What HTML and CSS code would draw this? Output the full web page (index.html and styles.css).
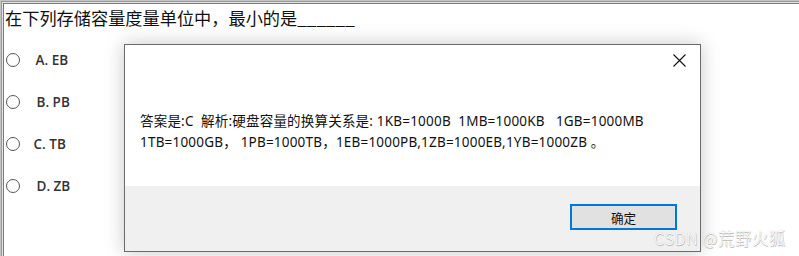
FILE: index.html
```html
<!DOCTYPE html>
<html lang="zh-CN">
<head>
<meta charset="utf-8">
<title>在下列存储容量度量单位中，最小的是</title>
<link rel="stylesheet" href="styles.css">
</head>
<body>
<div class="page">
  <div class="question">在下列存储容量度量单位中，最小的是______</div>
  <ul class="options">
    <li class="option"><span class="radio"></span><span class="label">A. EB</span></li>
    <li class="option opt-b"><span class="radio"></span><span class="label">B. PB</span></li>
    <li class="option opt-c"><span class="radio"></span><span class="label">C. TB</span></li>
    <li class="option opt-d"><span class="radio"></span><span class="label">D. ZB</span></li>
  </ul>

  <div class="dialog">
    <div class="dialog-head">
      <svg class="close" width="13" height="13" viewBox="0 0 13 13"><path d="M0.5 0.5 L12.5 12.5 M12.5 0.5 L0.5 12.5" stroke="#111" stroke-width="1.1" fill="none"/></svg>
    </div>
    <div class="dialog-body">
      <p class="msg">答案是:C  解析:硬盘容量的换算关系是: 1KB=1000B  1MB=1000KB   1GB=1000MB</p>
      <p class="msg">1TB=1000GB， 1PB=1000TB，1EB=1000PB,1ZB=1000EB,1YB=1000ZB 。</p>
    </div>
    <div class="dialog-foot">
      <button class="ok">确定</button>
    </div>
  </div>

  <div class="watermark">CSDN @荒野火狐</div>
</div>
</body>
</html>
```
FILE: styles.css
```css
html, body {
  margin: 0;
  padding: 0;
  background: #fff;
}
.page {
  position: relative;
  width: 799px;
  height: 256px;
  overflow: hidden;
  box-sizing: border-box;
  padding: 4px 0 0 4px;
  background: #fff;
  box-shadow: inset 1px 1px 0 #c4c4c4, inset 2px 2px 0 #9a9a9a, inset 3px 3px 0 #e4e4e4, inset 4px 4px 0 #7a7a7a;
  font-family: "Noto Sans CJK SC", "Noto Sans", sans-serif;
}
.question {
  margin-left: 1px;
  font-size: 17.2px;
  line-height: 28px;
  color: #111;
}
.options {
  list-style: none;
  margin: 0;
  padding: 0;
  display: flex;
  flex-direction: column;
  gap: 27px;
  margin-top: 20px;
}
.option {
  display: flex;
  align-items: center;
  height: 15px;
}
.radio {
  width: 12px;
  height: 12px;
  border: 1.5px solid #555;
  border-radius: 50%;
  margin-left: 1.5px;
  flex: none;
}
.label {
  font-family: "Open Sans", "Noto Sans", sans-serif;
  font-weight: 600;
  font-size: 13.5px;
  color: #333;
  margin-left: 16px;
}
.opt-b .label { margin-left: 17px; }
.opt-c .label { margin-left: 14px; }
.opt-d .label { margin-left: 17px; }

.dialog {
  position: absolute;
  left: 124px;
  top: 44px;
  width: 577px;
  height: 208px;
  box-sizing: border-box;
  border: 1px solid #6b6b6b;
  background: #fff;
  box-shadow: 0 0 18px rgba(0, 0, 0, 0.22);
  display: flex;
  flex-direction: column;
}
.dialog-head {
  height: 34px;
  display: flex;
  justify-content: flex-end;
  align-items: flex-start;
  padding: 9px 14px 0 0;
  box-sizing: border-box;
}
.close { display: block; }
.dialog-body {
  flex: 1;
  padding: 32px 0 0 15px;
}
.msg {
  margin: 0;
  white-space: pre;
  font-family: "Noto Sans", "Noto Sans CJK SC", sans-serif;
  font-size: 13.5px;
  letter-spacing: 0.2px;
  line-height: 21px;
  color: #111;
}
.dialog-foot {
  height: 65px;
  background: #f0f0f0;
  display: flex;
  justify-content: flex-end;
  align-items: flex-start;
  padding: 18px 23px 0 0;
  box-sizing: border-box;
}
.ok {
  width: 107px;
  height: 26px;
  box-sizing: border-box;
  border: 2px solid #0078d7;
  background: #e1e1e1;
  font-family: "Noto Sans CJK SC", sans-serif;
  font-size: 12.6px;
  color: #111;
  padding: 0;
}
.watermark {
  position: absolute;
  right: 13px;
  bottom: 6px;
  font-family: "Noto Sans CJK SC", "Noto Sans", sans-serif;
  font-size: 16.5px;
  font-weight: 300;
  letter-spacing: 0.5px;
  color: #fff;
  text-shadow: 0 0 1px #b0b0b0, 0.5px 0.5px 0.5px #b8b8b8;
}
```
